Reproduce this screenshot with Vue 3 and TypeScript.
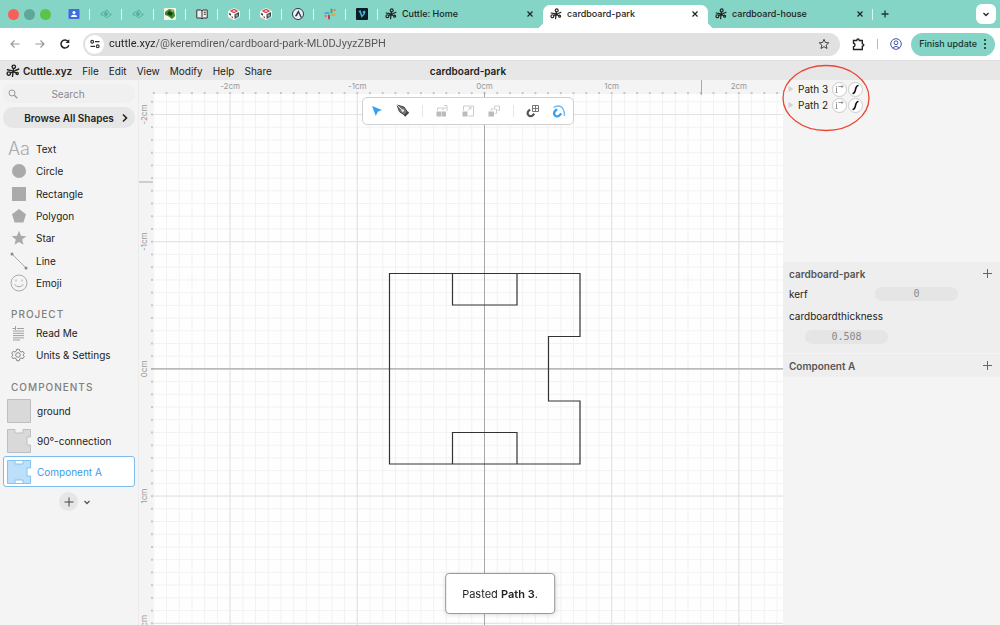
<script setup lang="ts">
import { computed, onBeforeUnmount, onMounted, ref } from 'vue'

interface PageTab { title: string; active: boolean }
interface Mark { n: number; p: number }

const pinned: string[] = ['people', 'eye', 'eye', 'leaf', 'book', 'cube', 'cube', 'ring', 'slack', 'video']
const tabs: PageTab[] = [
  { title: 'Cuttle: Home', active: false },
  { title: 'cardboard-park', active: true },
  { title: 'cardboard-house', active: false },
]
const menus: string[] = ['File', 'Edit', 'View', 'Modify', 'Help', 'Share']
const shapes: string[] = ['Text', 'Circle', 'Rectangle', 'Polygon', 'Star', 'Line', 'Emoji']
const components: string[] = ['ground', '90°-connection', 'Component A']
const selected = ref('Component A')
const paths: string[] = ['Path 3', 'Path 2']

const address = ref('cuttle.xyz/@keremdiren/cardboard-park-ML0DJyyzZBPH')
const search = ref('')
const kerf = ref('0')
const thickness = ref('0.508')

const cm = 127.2
const origin = { x: 345.5, y: 288.9 }
const canvas = ref<HTMLElement | null>(null)
const size = ref({ w: 644, h: 545 })

function marks(start: number, step: number, length: number): Mark[] {
  const list: Mark[] = []
  for (let n = Math.ceil((14 - start) / step); start + n * step < length; n++) list.push({ n, p: start + n * step })
  return list
}
const minorX = computed(() => marks(origin.x, cm / 10, size.value.w))
const minorY = computed(() => marks(origin.y, cm / 10, size.value.h))
const majorX = computed(() => marks(origin.x, cm, size.value.w))
const majorY = computed(() => marks(origin.y, cm, size.value.h))

function measure(): void {
  if (canvas.value) size.value = { w: canvas.value.clientWidth, h: canvas.value.clientHeight }
}
onMounted(() => {
  measure()
  window.addEventListener('resize', measure)
})
onBeforeUnmount(() => window.removeEventListener('resize', measure))
</script>

<template>
  <div class="window">
    <svg class="defs" aria-hidden="true">
      <symbol id="cuttle" viewBox="0 0 14 14">
        <g fill="none" stroke="currentColor" stroke-width="1.4" stroke-linecap="round">
          <circle cx="7.8" cy="2.800" r="1.700" />
          <circle cx="2.800" cy="9.600" r="1.700" />
          <path d="M7.500 4.600 6.500 12.400M4.400 8.800 12.800 5M1.400 5.800 5.500 6.600 9.800 8.800" />
          <circle cx="11.200" cy="9.500" r="1.100" />
        </g>
      </symbol>
    </svg>

    <header class="tabstrip">
      <div class="lights"><i class="red"></i><i class="gray"></i><i class="green"></i></div>
      <button v-for="(p, i) in pinned" :key="i" class="pin" :aria-label="p">
        <svg width="12" height="12" viewBox="0 0 12 12">
          <g v-if="p === 'people'">
            <rect x="0.5" y="1" width="11" height="10" rx="1" fill="#3f6ce0" />
            <circle cx="6" cy="4.6" r="1.5" fill="#fff" /><path d="M3 9q0-2.2 3-2.2T9 9z" fill="#fff" />
          </g>
          <g v-else-if="p === 'eye'" fill="none" stroke="#55b09c">
            <path d="M1 7Q1 4 4 4T6 2q2 0 2.500 2T11.500 6.500Q9 7 8.500 9 6 10.500 5 8.500T1 7z" /><circle cx="6" cy="6" r="1.500" fill="#55b09c" />
          </g>
          <g v-else-if="p === 'leaf'">
            <rect width="12" height="12" rx="1" fill="#f4f7e8" />
            <path d="M1 4 5 1l5 1 1 6-3 3-4-3-3-1z" fill="#3c8a2c" />
            <path d="M5 3 9 5 7 8 3 6z" fill="#173d13" /><circle cx="8.5" cy="2.8" r="1.2" fill="#8cc63f" />
          </g>
          <g v-else-if="p === 'book'">
            <path d="M0.8 2h4L6 3l1.200-1h4v8H7L6 11l-1-1H0.800z" fill="#eee" stroke="#333" />
            <path d="M6 3v7.500M7.800 4.300h2M7.800 6.300h2" stroke="#333" />
          </g>
          <g v-else-if="p === 'cube'">
            <path d="M6 0 11.800 3v6L6 12 .2 9V3z" fill="#fff" />
            <path d="M6 .8 10.300 3 6 5.200 1.700 3z" fill="#d9363a" /><ellipse cx="6" cy="3" rx="1.500" ry="0.800" fill="#fff" />
            <path d="M6.500 6.200 11 4v4.600l-4.500 2.500z" fill="#3c4a4a" /><circle cx="8.800" cy="7.500" r="1.200" fill="#5dc7b5" />
            <path d="M1.200 4.800 3 5.700v2L1.200 6.800z" fill="#333" /><path d="M3.500 8 5 8.800v1.700L3.500 9.700z" fill="#d9363a" />
          </g>
          <g v-else-if="p === 'ring'">
            <circle cx="6" cy="6" r="5.500" fill="#eef2f7" stroke="#2b3546" />
            <path d="M6.500 2 2.800 8.200h2L6.500 5l2 4.500H10z" fill="#2b3546" />
          </g>
          <g v-else-if="p === 'slack'" fill="none" stroke-width="2" stroke-linecap="round">
            <path d="M1.500 5h3" stroke="#50a7c7" /><path d="M5 7.500v3" stroke="#c7365d" />
            <path d="M7.500 1.500v3" stroke="#43a56f" /><path d="M8 7h2.500" stroke="#e0a83c" /><path d="M1.500 8h.5M10.500 2h.2" stroke="#ee6a50" />
          </g>
          <g v-else>
            <rect width="12" height="12" rx="1" fill="#0d1b25" />
            <path d="M2.800 3.800 4.200 3.300 5.800 8.500Q9 5.500 8.600 3.500 7.500 3.200 7 4.800" fill="none" stroke="#3cb8dc" stroke-width="1.500" />
          </g>
        </svg>
      </button>
      <div v-for="t in tabs" :key="t.title" class="tab" :class="{ active: t.active }">
        <svg class="logo" width="12" height="12"><use href="#cuttle" /></svg>
        <button class="tab-title">{{ t.title }}</button>
        <button class="close" aria-label="Close tab">
          <svg width="8" height="8" viewBox="0 0 8 8"><path d="M1.500 1.500l5 5M6.500 1.500l-5 5" stroke="#222" stroke-width="1.200" /></svg>
        </button>
      </div>
      <button class="new" aria-label="New tab">
        <svg width="10" height="10" viewBox="0 0 10 10"><path d="M5 1.500v7M1.500 5h7" stroke="#1d3a34" stroke-width="1.300" /></svg>
      </button>
      <button class="tab-menu" aria-label="Search tabs">
        <svg width="8" height="8" viewBox="0 0 8 8"><path d="M1.500 3 4 5.500 6.500 3" fill="none" stroke="#222" stroke-width="1.300" /></svg>
      </button>
    </header>

    <div class="navbar">
      <button aria-label="Back"><svg width="12" height="12" viewBox="0 0 12 12"><path d="M10.500 6H2M5.500 2.500 2 6l3.500 3.500" fill="none" stroke="#999" stroke-width="1.200" /></svg></button>
      <button aria-label="Forward"><svg width="12" height="12" viewBox="0 0 12 12"><path d="M1.500 6H10M6.500 2.500 10 6 6.500 9.500" fill="none" stroke="#999" stroke-width="1.200" /></svg></button>
      <button aria-label="Reload"><svg width="12" height="12" viewBox="0 0 12 12"><path d="M9.800 7.200A4 4 0 1 1 9 3.300" fill="none" stroke="#222" stroke-width="1.500" /><path d="M10.300 1.200v3.800H6.500z" fill="#222" /></svg></button>
      <div class="address">
        <span class="site">
          <svg width="10" height="10" viewBox="0 0 10 10" fill="none" stroke="#333" stroke-width="1.200"><circle cx="2.200" cy="2.700" r="1.400" /><path d="M5 2.700h4.500M.5 7.300H5" /><circle cx="7.700" cy="7.300" r="1.400" /></svg>
        </span>
        <input v-model="address" type="text" aria-label="Address" />
        <button aria-label="Bookmark"><svg width="12" height="12" viewBox="0 0 12 12"><path d="M6 1.300 7.400 4.500l3.400.3-2.600 2.300.8 3.400L6 8.700 3 10.500l.8-3.400L1.200 4.800l3.400-.3z" fill="none" stroke="#444" /></svg></button>
      </div>
      <button class="ext" aria-label="Extensions"><svg width="13" height="13" viewBox="0 0 13 13"><path d="M1.500 2.500h3.200q.3-1.500 1.300-1.500t1.300 1.500h3v3.200q1.500.3 1.500 1.300t-1.500 1.300v3.200H1.500V8.700q1.500-.3 1.500-1.700T1.500 5.300z" fill="none" stroke="#222" stroke-width="1.400" /></svg></button>
      <i class="bar"></i>
      <button class="profile" aria-label="Profile"><svg width="12" height="12" viewBox="0 0 12 12" fill="none" stroke="#3f57a0"><circle cx="6" cy="6" r="5.300" /><circle cx="6" cy="4.800" r="1.900" /><path d="M2.500 9.800Q6 6.800 9.500 9.800" /></svg></button>
      <button class="update">Finish update
        <svg width="4" height="12" viewBox="0 0 4 12" fill="#17332d"><circle cx="2" cy="2" r="1.100" /><circle cx="2" cy="6" r="1.100" /><circle cx="2" cy="10" r="1.100" /></svg>
      </button>
    </div>

    <div class="menubar">
      <nav>
        <svg class="logo" width="14" height="14"><use href="#cuttle" /></svg>
        <button class="brand">Cuttle.xyz</button>
        <button v-for="m in menus" :key="m">{{ m }}</button>
      </nav>
      <h1>cardboard-park</h1>
    </div>

    <div class="workspace">
      <aside class="left">
        <div class="search">
          <svg width="10" height="10" viewBox="0 0 10 10" fill="none" stroke="#999"><circle cx="4" cy="4" r="3" /><path d="M6.300 6.300 9.300 9.300" stroke-width="1.300" /></svg>
          <input v-model="search" type="text" placeholder="Search" aria-label="Search" />
        </div>
        <button class="browse"><span>Browse All Shapes</span>
          <svg width="8" height="10" viewBox="0 0 8 10"><path d="M2 1.500 5.500 5 2 8.500" fill="none" stroke="#222" stroke-width="1.600" /></svg>
        </button>
        <div class="shapes">
          <button v-for="s in shapes" :key="s" class="row">
            <span v-if="s === 'Text'" class="glyph aa" aria-hidden="true">Aa</span>
            <svg v-else class="glyph" width="22" height="20" viewBox="0 0 22 20">
              <circle v-if="s === 'Circle'" cx="11" cy="10" r="7" fill="#aaa" />
              <rect v-else-if="s === 'Rectangle'" x="4" y="3" width="14" height="14" fill="#aaa" />
              <path v-else-if="s === 'Polygon'" d="M11 3 18 8.200 15.400 16.500H6.600L4 8.200z" fill="#aaa" />
              <path v-else-if="s === 'Star'" d="M11 2.800 13 7.800l5.300.4-4.100 3.400 1.300 5.200-4.500-2.900-4.500 2.900 1.300-5.200-4.100-3.400 5.300-.4z" fill="#aaa" />
              <g v-else-if="s === 'Line'"><path d="M4 3 18 17" stroke="#aaa" /><circle cx="4" cy="3" r="1.500" fill="#888" /><circle cx="18" cy="17" r="1.500" fill="#888" /></g>
              <g v-else fill="none" stroke="#aaa"><circle cx="11" cy="10" r="8" /><path d="M6.500 11.500Q11 16 15.500 11.500M8 6.500v2M14 6.500v2" /></g>
            </svg>
            {{ s }}
          </button>
        </div>

        <h2>PROJECT</h2>
        <div class="project">
          <button class="row">
            <svg class="glyph" width="22" height="20" viewBox="0 0 22 20" stroke="#a0a0a0"><path d="M9 5.500h7M5 8h11M5 10.300h11M5 12.600h11M5 14.900h11M5 17h7M4.500 5.500h3.500M7.500 3v4" /></svg>
            Read Me
          </button>
          <button class="row">
            <svg class="glyph" width="22" height="20" viewBox="0 0 22 20" fill="none" stroke="#888">
              <path d="M8.700 4.300h2.600l.5 1.900 1.300.8 1.900-.6 1.300 2.200-1.400 1.400 1.400 1.400-1.300 2.200-1.900-.6-1.300.8-.5 1.900H8.700l-.5-1.900-1.300-.8-1.900.6-1.300-2.200L5.100 10 3.700 8.600 5 6.400l1.900.6 1.300-.8z" /><circle cx="10" cy="10" r="2.300" />
            </svg>
            Units &amp; Settings
          </button>
        </div>

        <h2>COMPONENTS</h2>
        <div class="components">
          <button v-for="c in components" :key="c" class="comp" :class="{ selected: selected === c }" @click="selected = c">
            <svg width="24" height="24" viewBox="0 0 24 24">
              <path v-if="c === 'ground'" d="M.5.5h23v23H.5z" />
              <path v-else-if="c === '90°-connection'" d="M.5.5h7.500V4h8V.5h7.500V8H20v8h3.500v7.500H.5z" />
              <path v-else d="M.5.500h7.500V4h8V.5h7.500V8H20v8h3.500v7.500H16V20H8v3.500H.5zM8 .500h8M8 23.500h8" />
            </svg>
            {{ c }}
          </button>
        </div>
        <div class="adder">
          <button class="plus" aria-label="Add component"><svg width="10" height="10" viewBox="0 0 10 10"><path d="M5 .5v9M.5 5h9" stroke="#444" /></svg></button>
          <button aria-label="More"><svg width="8" height="8" viewBox="0 0 8 8"><path d="M1.500 3 4 5.500 6.500 3" fill="none" stroke="#555" stroke-width="1.300" /></svg></button>
        </div>
      </aside>

      <main ref="canvas" class="canvas">
        <svg class="drawing" width="100%" height="100%">
          <rect width="100%" height="100%" fill="#fefefe" />
          <g stroke="#f2f2f2">
            <line v-for="l in minorX" :key="l.n" :x1="l.p" :x2="l.p" y1="0" y2="100%" />
            <line v-for="l in minorY" :key="l.n" :y1="l.p" :y2="l.p" x1="0" x2="100%" />
          </g>
          <g stroke="#e2e2e2">
            <line v-for="l in majorX" :key="l.n" :x1="l.p" :x2="l.p" y1="0" y2="100%" />
            <line v-for="l in majorY" :key="l.n" :y1="l.p" :y2="l.p" x1="0" x2="100%" />
          </g>
          <rect width="100%" height="14" fill="#f4f4f4" />
          <rect width="14" height="100%" fill="#f4f4f4" />
          <g fill="#c8c8c8">
            <rect v-for="l in minorX" :key="l.n" :x="l.p - 1" y="12" width="2" height="2" />
            <rect v-for="l in minorY" :key="l.n" :y="l.p - 1" x="12" width="2" height="2" />
          </g>
          <g stroke="#a8a8a8">
            <line :x1="origin.x" :x2="origin.x" y1="12" y2="100%" />
            <line :y1="origin.y" :y2="origin.y" x1="12" x2="100%" stroke-width="1.400" />
            <path d="M562.500 0v15M0 102h14" />
          </g>
          <g class="ticks">
            <text v-for="l in majorX" :key="l.n" :x="l.p" y="9">{{ l.n }}cm</text>
            <text v-for="l in majorY" :key="l.n" :transform="`translate(8 ${l.p}) rotate(-90)`">{{ l.n }}cm</text>
          </g>
          <path d="M250.500 193.500h190.500v63h-31.500v64.500h31.500v63H250.500zM313.500 193.500V225h64.500v-31.500M313.500 384v-31.500h64.500V384" fill="none" stroke="#333" stroke-width="1.200" />
        </svg>
        <div class="tools">
          <button aria-label="Select"><svg width="16" height="16" viewBox="0 0 16 16"><path d="M3 3 13 7 8.800 8.800 6.800 13z" fill="#38a0f0" /></svg></button>
          <button aria-label="Pen"><svg width="16" height="16" viewBox="0 0 16 16"><path d="M2 2 9 4l3.500 5-3 3-5-3.300z" fill="#777" stroke="#444" /><path d="M2 2 7.500 7.500" stroke="#eee" /><circle cx="7.800" cy="7.600" r="1.200" fill="#fff" /><path d="m9.500 13 4-4" stroke="#444" stroke-width="2" /></svg></button>
          <i></i>
          <button aria-label="Align"><svg width="16" height="16" viewBox="0 0 16 16"><path d="M2.500 8.500h4.500v5H2.500zM7.500 8.500h4.500v5H7.500z" fill="#bbb" /><path d="M3.500 7.500V5H9v2.500M9 5h4V2.500h-3M13 5v3" fill="none" stroke="#ccc" /></svg></button>
          <button aria-label="Scale"><svg width="16" height="16" viewBox="0 0 16 16"><path d="M2.500 8.500h5v5h-5z" fill="#bbb" /><path d="M3.500 7.500V3h10v10H8.500M8 7.500l3-3M9 4.500h2v2" fill="none" stroke="#ccc" /></svg></button>
          <button aria-label="Repeat"><svg width="16" height="16" viewBox="0 0 16 16"><path d="M2.500 8.500h5.500v5H2.500z" fill="#bbb" /><path d="M5 7.500V6h5.500v4.500H9M8.500 5V3h5v4.500h-2" fill="none" stroke="#ccc" /></svg></button>
          <i></i>
          <button aria-label="Snap to grid"><svg width="16" height="16" viewBox="0 0 16 16" fill="none"><path d="M5 6.500 3.500 8a3 3 0 0 0 4.300 4.300l1.500-1.500" stroke="#555" stroke-width="2.200" /><path d="M7.500 2.500h6v6h-6zM10.500 2.500v6M7.500 5.500h6" stroke="#777" /></svg></button>
          <button aria-label="Snap to geometry"><svg width="16" height="16" viewBox="0 0 16 16" fill="none"><path d="M6 6.200 4 8.200a3 3 0 0 0 4.300 4.300l2-2" stroke="#38a0f0" stroke-width="2.400" /><path d="M2.500 4.500Q5 2.800 8 3q5.500.8 5.500 10" stroke="#6db8f3" stroke-width="1.300" /></svg></button>
        </div>
      </main>

      <aside class="right">
        <div class="tree">
          <div v-for="p in paths" :key="p" class="node">
            <svg width="6" height="8" viewBox="0 0 6 8"><path d="M.5 1 5.500 4 .5 7z" fill="#d2d2d2" /></svg>
            <button class="name">{{ p }}</button>
            <button class="round" aria-label="Transform"><svg width="13" height="13" viewBox="0 0 13 13" fill="none" stroke="#999"><path d="M3.500 4.500V10M2.500 9.500h2M5.500 3.500H10M8.500 2 10 3.500 8.500 5M3 3.500h1" /></svg></button>
            <button class="round" aria-label="Style"><svg width="13" height="13" viewBox="0 0 13 13"><path d="M3.500 10.500q2.200 0 3-4t3-4" fill="none" stroke="#111" stroke-width="1.600" /></svg></button>
          </div>
          <svg class="circled" width="90" height="68" viewBox="0 0 90 68"><ellipse cx="45" cy="34" rx="43" ry="32.500" fill="none" stroke="#ec4632" stroke-width="1.300" /></svg>
        </div>
        <section>
          <header><h3>cardboard-park</h3><button aria-label="Add parameter"><svg width="9" height="9" viewBox="0 0 9 9"><path d="M4.500 0v9M0 4.500h9" stroke="#666" /></svg></button></header>
          <div class="param"><label for="kerf">kerf</label><input id="kerf" v-model="kerf" type="text" /></div>
          <div class="param stacked"><label for="thick">cardboardthickness</label><input id="thick" v-model="thickness" type="text" /></div>
        </section>
        <section>
          <header><h3>Component A</h3><button aria-label="Add parameter"><svg width="9" height="9" viewBox="0 0 9 9"><path d="M4.500 0v9M0 4.500h9" stroke="#666" /></svg></button></header>
        </section>
      </aside>
    </div>

    <div class="toast" role="status">Pasted&nbsp;<b>Path 3</b>.</div>
  </div>
</template>

<style>
body { margin: 0; overflow: hidden; }
</style>

<style scoped>
.window { height: 100vh; display: flex; flex-direction: column; background: #f4f4f4; color: #222; font: 10px/14px Inter, "Liberation Sans", sans-serif; }
* { box-sizing: border-box; }
button { display: flex; align-items: center; justify-content: center; flex: none; padding: 0; border: 0; background: none; color: inherit; font: inherit; }
input { min-width: 0; padding: 0; border: 0; background: none; color: inherit; font: inherit; outline: 0; }
svg { display: block; flex: none; }
h1, h2, h3 { margin: 0; font-size: 10px; font-weight: 600; }
b { font-weight: 600; }
.defs { position: absolute; width: 0; height: 0; }

.tabstrip { display: flex; align-items: center; height: 28px; background: #85d5c6; font-size: 9px; }
.lights { display: flex; gap: 5px; width: 58px; padding-left: 8px; }
.lights i { width: 11px; height: 11px; border-radius: 50%; background: #5fa797; }
.lights .red { background: #f4605a; }
.lights .green { background: #5bc24c; }
.pin { position: relative; width: 32px; height: 28px; }
.pin::after, .tab:last-of-type::after { content: ""; position: absolute; right: 0; top: 9px; width: 1px; height: 11px; background: #dff5f0; }
.tab { position: relative; display: flex; align-items: center; width: 165px; height: 28px; padding: 0 7px 0 7px; font-weight: 500; }
.tab.active { align-self: flex-end; height: 23px; padding-bottom: 5px; background: #fff; border-radius: 7px 7px 0 0; }
.tab.active::before, .tab.active::after { content: ""; position: absolute; bottom: 0; width: 7px; height: 7px; }
.tab.active::before { left: -7px; background: radial-gradient(circle at 0 0, transparent 7px, #fff 7px); }
.tab.active::after { right: -7px; background: radial-gradient(circle at 100% 0, transparent 7px, #fff 7px); }
.tab-title { flex: 1; justify-content: flex-start; padding-left: 5px; }
.tab .close { width: 12px; height: 12px; }
.new { width: 24px; height: 28px; }
.tab-menu { width: 20px; height: 20px; margin: 0 4px 0 auto; border-radius: 6px; background: #fff; }

.navbar { display: flex; align-items: center; height: 33px; padding: 0 5px 0 9px; background: #fff; border-bottom: 1px solid #ddd; }
.navbar > button:nth-child(-n+3) { width: 12px; margin-right: 13px; }
.address { flex: 1; display: flex; align-items: center; height: 23px; margin-left: -1px; padding: 0 10px 0 2px; border-radius: 12px; background: #e1e1e1; }
.site { display: flex; align-items: center; justify-content: center; width: 19px; height: 19px; border-radius: 50%; background: #fff; }
.address input { flex: 1; margin-left: 5px; color: transparent; background: linear-gradient(90deg, #222 46px, #555 46px); background-clip: text; font-family: Roboto, sans-serif; font-size: 11px; }
.ext { margin-left: 12px; }
.bar { width: 1px; height: 10px; margin: 0 12px; background: #7ed3c3; }
.update { gap: 6px; height: 23px; margin-left: 9px; padding: 0 8px; border-radius: 12px; background: #85d5c6; color: #17332d; font-size: 9px; font-weight: 500; }

.menubar { display: grid; grid-template-columns: 153px 1fr 217px; align-items: center; height: 19px; background: #e7e7e7; }
nav { display: flex; align-items: center; gap: 10px; padding-left: 6px; }
nav .logo { margin-right: -7px; }
.brand { font-weight: 600; }
h1 { text-align: center; }

.workspace { flex: 1; display: flex; min-height: 0; }
.left { display: flex; flex-direction: column; flex: none; width: 139px; padding: 4px 3px 0; border-right: 1px solid #ebebeb; }
.search { display: flex; align-items: center; height: 19px; padding: 0 5px; border-radius: 10px; background: #f0f0f0; }
.search input { flex: 1; padding-right: 12px; text-align: center; }
.search input::placeholder { color: #8a8a8a; opacity: 1; }
.browse { height: 21px; margin-top: 4px; padding: 0 6px; border-radius: 11px; background: #e6e6e6; font-weight: 600; }
.browse span { flex: 1; text-align: center; padding-left: 8px; }
.shapes { display: flex; flex-direction: column; justify-content: space-between; height: 156px; margin-top: 10px; }
.row { height: 22px; justify-content: flex-start; padding-left: 5px; }
.glyph { width: 22px; margin-right: 6px; }
.aa { color: #aaa; font-size: 18px; font-weight: 300; text-align: center; }
h2 { margin: 13px 0 0 8px; color: #808080; letter-spacing: 1px; font-weight: 500; }
.project { display: flex; flex-direction: column; margin: 1px 0; }
.components { display: flex; flex-direction: column; margin-top: 2px; }
.comp { height: 30px; justify-content: flex-start; gap: 6px; padding-left: 3px; border: 1px solid transparent; border-radius: 3px; white-space: nowrap; }
.comp path { fill: #d9d9d9; stroke: #bfbfbf; }
.comp.selected { height: 31px; border-color: #7bbdee; background: #fff; color: #3b9be6; }
.comp.selected path { fill: #bcdffa; stroke: #85c2f0; }
.adder { display: flex; align-items: center; gap: 5px; margin: 5px 0 0 56px; }
.plus { width: 19px; height: 19px; border-radius: 50%; background: #e6e6e6; }

.canvas { position: relative; flex: 1; min-width: 0; }
.drawing { position: absolute; inset: 0; }
.ticks { fill: #999; font-size: 8px; text-anchor: middle; }
.tools { position: absolute; top: 17px; left: calc(50% + 7px); transform: translateX(-50%); display: flex; align-items: center; gap: 10px; height: 28px; padding: 0 6px; border: 1px solid #d0d0d0; border-radius: 5px; background: #fff; }
.tools i { width: 1px; height: 12px; margin: 0 1px; background: #e6e6e6; }

.right { flex: none; display: flex; flex-direction: column; width: 217px; }
.tree { position: relative; height: 182px; padding: 1px 0 0 5px; }
.node { display: flex; align-items: center; height: 16px; }
.name { padding: 0 4px; }
.round { width: 15px; height: 15px; margin-right: 1px; border: 1px solid #ccc; border-radius: 50%; background: #fff; }
.circled { position: absolute; left: -2px; top: -16px; pointer-events: none; }
section { background: #eee; border-bottom: 1px solid #f4f4f4; padding: 0 8px 0 6px; }
section header { display: flex; align-items: center; justify-content: space-between; height: 23px; }
h3 { color: #555; }
.param { display: flex; align-items: center; height: 18px; }
.param label { flex: 1; }
.param input { width: 83px; height: 14px; margin-right: 34px; border-radius: 7px; background: #e5e5e5; color: #888; text-align: center; font: 10px/14px "DejaVu Sans Mono", monospace; }
.param.stacked { display: block; height: 50px; padding-top: 6px; }
.param.stacked label { display: block; }
.param.stacked input { display: block; margin: 7px 0 0 16px; }

.toast { position: fixed; left: 50%; bottom: 11px; transform: translateX(-50%); display: flex; align-items: center; height: 41px; padding: 0 16px; border: 1px solid #999; border-radius: 4px; background: #fff; box-shadow: 0 1px 4px #0002; font-size: 11px; white-space: nowrap; }
</style>
